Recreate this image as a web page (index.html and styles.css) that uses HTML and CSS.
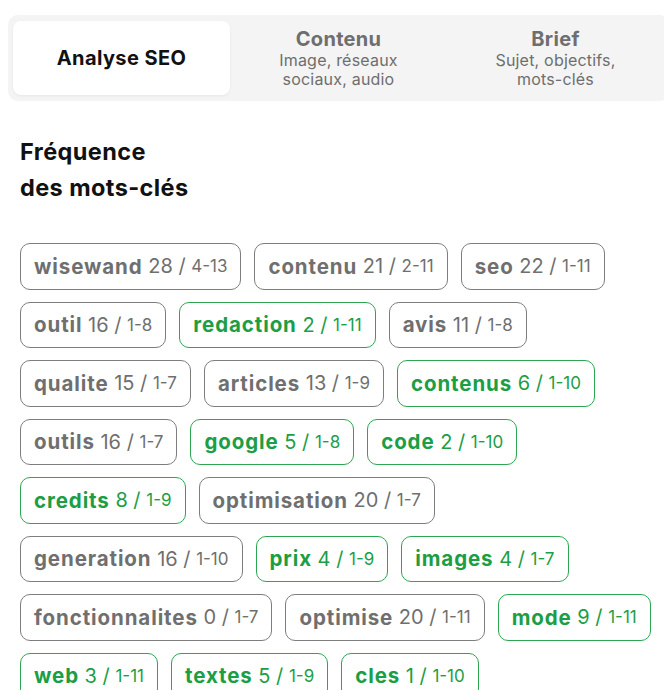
FILE: index.html
```html
<!DOCTYPE html>
<html lang="fr">
  <head>
    <meta charset="UTF-8" />
    <meta name="viewport" content="width=device-width, initial-scale=1.0" />
    <title>Analyse SEO</title>
    <link rel="stylesheet" href="styles.css">
  </head>
  <body>
    <div class="tabs">
      <div class="tab active">
        <div class="tab-title">Analyse SEO</div>
      </div>
      <div class="tab">
        <div class="tab-title">Contenu</div>
        <div class="tab-sub">Image, réseaux<br>sociaux, audio</div>
      </div>
      <div class="tab">
        <div class="tab-title">Brief</div>
        <div class="tab-sub">Sujet, objectifs,<br>mots-clés</div>
      </div>
    </div>

    <h2 class="section-title">Fréquence<br>des mots-clés</h2>

    <div class="keywords" id="keywords"></div>

    <script>
      const keywords = [
        ["wisewand", 28, "4-13", false],
        ["contenu", 21, "2-11", false],
        ["seo", 22, "1-11", false],
        ["outil", 16, "1-8", false],
        ["redaction", 2, "1-11", true],
        ["avis", 11, "1-8", false],
        ["qualite", 15, "1-7", false],
        ["articles", 13, "1-9", false],
        ["contenus", 6, "1-10", true],
        ["outils", 16, "1-7", false],
        ["google", 5, "1-8", true],
        ["code", 2, "1-10", true],
        ["credits", 8, "1-9", true],
        ["optimisation", 20, "1-7", false],
        ["generation", 16, "1-10", false],
        ["prix", 4, "1-9", true],
        ["images", 4, "1-7", true],
        ["fonctionnalites", 0, "1-7", false],
        ["optimise", 20, "1-11", false],
        ["mode", 9, "1-11", true],
        ["web", 3, "1-11", true],
        ["textes", 5, "1-9", true],
        ["cles", 1, "1-10", true],
      ];

      const list = document.getElementById("keywords");
      keywords.forEach(([word, count, range, ok]) => {
        const tag = document.createElement("div");
        tag.className = ok ? "tag good" : "tag";
        tag.innerHTML =
          "<b>" + word + "</b> " + count + " / <span class=\"range\">" + range + "</span>";
        list.appendChild(tag);
      });
    </script>
  </body>
</html>
```

FILE: styles.css
```css
html, body {
  overflow-x: hidden;
}
body {
  margin: 0;
  font-family: Inter, "Noto Sans", sans-serif;
  color: #111;
  background: #fff;
}
.tabs {
  display: flex;
  margin: 15px 0 0 8px;
  width: 661px;
  padding: 6px 5px;
  box-sizing: border-box;
  background: #f4f4f4;
  border-radius: 10px;
}
.tab {
  flex: 1;
  height: 74px;
  display: flex;
  flex-direction: column;
  justify-content: center;
  align-items: center;
  text-align: center;
  color: #6e6e6e;
  border-radius: 8px;
}
.tab.active {
  background: #fff;
  color: #111;
  box-shadow: 0 1px 3px rgba(0, 0, 0, 0.06);
}
.tab-title {
  font-weight: 700;
  font-size: 20px;
  line-height: 24px;
  letter-spacing: 0.3px;
}
.tab.active .tab-title {
  letter-spacing: 0.4px;
}
.tab-sub {
  font-size: 16px;
  line-height: 19.5px;
  letter-spacing: 0.2px;
}
.section-title {
  margin: 33px 0 0 20px;
  font-size: 23.5px;
  line-height: 36px;
  font-weight: 700;
  letter-spacing: 0.4px;
}
.keywords {
  display: flex;
  flex-wrap: wrap;
  gap: 12px 13px;
  margin-top: 37px;
  padding: 0 6px 0 20px;
}
.tag {
  border: 1.5px solid #7d7d7d;
  border-radius: 10px;
  padding: 0 13px;
  height: 46.5px;
  box-sizing: border-box;
  display: flex;
  align-items: center;
  white-space: pre;
  font-size: 20px;
  color: #6f6f6f;
}
.tag b {
  font-weight: 700;
  font-size: 20.5px;
  letter-spacing: 0.9px;
}
.tag .range {
  font-size: 17px;
}
.tag.good {
  border-color: #2ca653;
  color: #1b9e45;
}
```
